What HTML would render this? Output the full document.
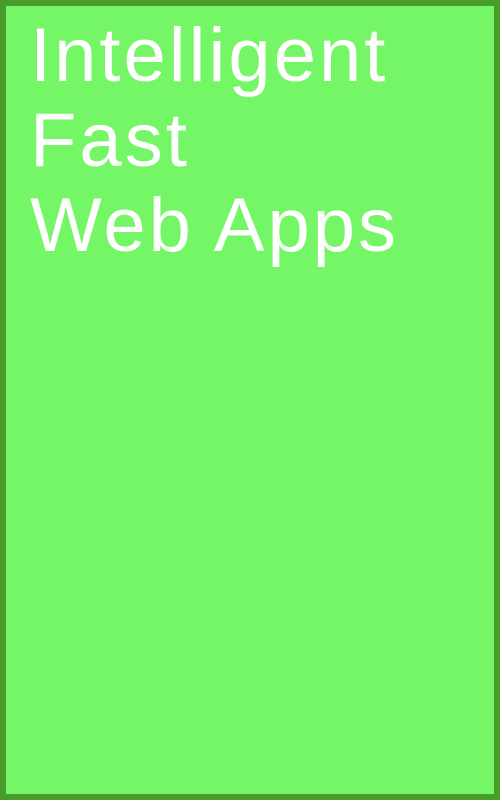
<!DOCTYPE html>
<html><head><style>
html,body{margin:0;padding:0}
body{width:500px;height:800px;box-sizing:border-box;border:6px solid #489c2b;background:#75f667;position:relative;overflow:hidden}
.t{position:absolute;left:24px;top:7px;color:#fff;font-family:"Liberation Sans",sans-serif;font-size:76px;line-height:85px;letter-spacing:3px;font-weight:normal}
</style></head><body>
<div class="t">Intelligent<br>Fast<br>Web Apps</div>
</body></html>
